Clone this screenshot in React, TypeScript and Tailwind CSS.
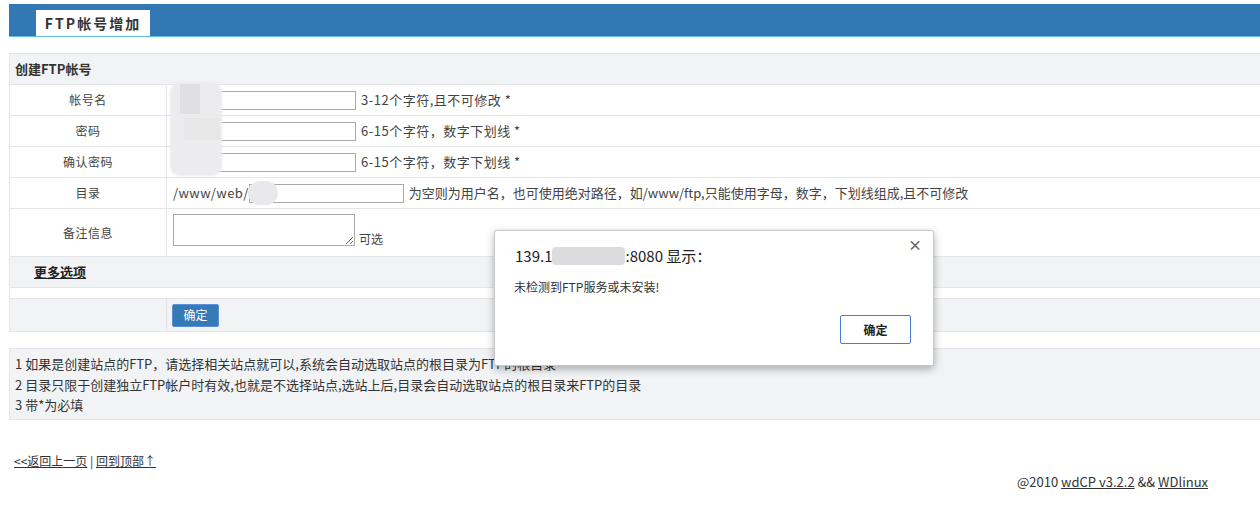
import React from 'react';

const font = { fontFamily: '"Noto Sans CJK SC", "Noto Sans", sans-serif' };

function Row({ label, children, tall }: { label: string; children: React.ReactNode; tall?: boolean }) {
  return (
    <div className={`flex border-b border-[#e3e5ea] bg-white ${tall ? 'h-[48px]' : 'h-[31px]'}`}>
      <div className="w-[157px] shrink-0 border-r border-[#e3e5ea] flex items-center justify-center text-[12px] tracking-[0.5px] text-[#444]">
        {label}
      </div>
      <div className={`flex-1 flex pl-[6px] text-[13px] text-[#444] ${tall ? 'items-start pt-[5px]' : 'items-center'}`}>
        {children}
      </div>
    </div>
  );
}

function Input({ w }: { w: string }) {
  return <input className={`${w} h-[19px] border border-[#a9a9a9] bg-white outline-none`} />;
}

export default function App() {
  return (
    <div className="relative w-[1260px] h-[511px] overflow-hidden bg-white" style={font}>
      <div className="pt-[4px] pl-[9px]">
        {/* top bar */}
        <div className="h-[33px] bg-[#3278b4] border-b border-[#5bc0de] flex items-end pl-[27px]">
          <div className="w-[114px] h-[26px] bg-white flex items-center justify-center text-[14px] font-bold tracking-[2px] text-[#333]">
            FTP帐号增加
          </div>
        </div>

        {/* form */}
        <div className="mt-[16px] border-t border-l border-[#e3e5ea] w-[1260px]">
          <div className="h-[31px] bg-[#f2f3f5] border-b border-[#e3e5ea] flex items-center pl-[5px] text-[13px] font-bold text-[#333]">
            创建FTP帐号
          </div>
          <Row label="帐号名">
            <Input w="w-[183px]" />
            <span className="ml-[5px] tracking-[0.5px]">3-12个字符,且不可修改 *</span>
          </Row>
          <Row label="密码">
            <Input w="w-[183px]" />
            <span className="ml-[5px] tracking-[0.5px]">6-15个字符，数字下划线 *</span>
          </Row>
          <Row label="确认密码">
            <Input w="w-[183px]" />
            <span className="ml-[5px] tracking-[0.5px]">6-15个字符，数字下划线 *</span>
          </Row>
          <Row label="目录">
            <span className="tracking-[0.4px]">/www/web/</span>
            <Input w="w-[155px]" />
            <span className="ml-[5px]">为空则为用户名，也可使用绝对路径，如/www/ftp,只能使用字母，数字，下划线组成,且不可修改</span>
          </Row>
          <Row label="备注信息" tall>
            <div className="flex items-end">
              <textarea className="w-[182px] h-[32px] border border-[#a9a9a9] resize-y outline-none block" />
              <span className="ml-[4px] leading-[14px] text-[12px]">可选</span>
            </div>
          </Row>
          <div className="h-[31px] bg-[#f2f3f5] border-b border-[#e3e5ea] flex items-center pl-[24px]">
            <span className="text-[13px] font-bold text-[#222] underline">更多选项</span>
          </div>
          <div className="h-[11px] bg-white border-b border-[#e3e5ea]" />
          <div className="h-[33px] bg-[#f2f3f5] border-b border-[#e3e5ea] flex">
            <div className="w-[157px] border-r border-[#e3e5ea]" />
            <div className="flex items-center pl-[5px]">
              <button className="w-[47px] h-[23px] bg-[#337ab7] border border-[#5b8fd8] rounded-[2px] text-white text-[12px]">
                确定
              </button>
            </div>
          </div>
        </div>

        {/* notes */}
        <div className="mt-[16px] w-[1260px] h-[72px] bg-[#f2f3f5] border-t border-l border-b border-[#e3e5ea] pl-[5px] pt-[5px] text-[13px] text-[#333] leading-[20.5px]">
          <div>1 如果是创建站点的FTP，请选择相关站点就可以,系统会自动选取站点的根目录为FTP的根目录</div>
          <div>2 目录只限于创建独立FTP帐户时有效,也就是不选择站点,选站上后,目录会自动选取站点的根目录来FTP的目录</div>
          <div>3 带*为必填</div>
        </div>

        {/* footer */}
        <div className="mt-[32px] pl-[5px] text-[12px] text-[#333]">
          <span className="underline">&lt;&lt;返回上一页</span> | <span className="underline">回到顶部↑</span>
        </div>
        <div className="mt-[2px] pl-[1008px] text-[13px] text-[#333]">
          @2010 <span className="underline">wdCP v3.2.2</span> &amp;&amp; <span className="underline">WDlinux</span>
        </div>
      </div>

      {/* privacy blur */}
      <div className="absolute left-[170px] top-[82px] w-[52px] h-[94px] rounded-[10px] bg-[#ececee] blur-[1px]" />
      <div className="absolute left-[180px] top-[84px] w-[20px] h-[30px] bg-[#e0e0e4]" />
      <div className="absolute left-[184px] top-[118px] w-[36px] h-[22px] bg-[#e7e7e8]" />
      <div className="absolute left-[248px] top-[181px] w-[30px] h-[24px] rounded-full bg-[#e9e9ec]" />

      {/* alert dialog */}
      <div className="absolute left-[494px] top-[230px] w-[440px] h-[136px] bg-white border border-[#c8c8c8] rounded-[2px] shadow-[0_3px_8px_rgba(0,0,0,0.3)]">
        <div className="absolute right-[11px] top-[3px] text-[14px] text-[#666] font-bold">×</div>
        <div className="pl-[20px] pt-[14px] text-[15px] text-[#222] flex items-center">
          <span>139.1</span>
          <span className="inline-block w-[73px] h-[18px] bg-[#dcdcde] rounded-[4px]" />
          <span>:8080 显示：</span>
        </div>
        <div className="pl-[19px] mt-[10px] text-[12px] text-[#333]">未检测到FTP服务或未安装!</div>
        <div className="absolute right-[22px] bottom-[21px]">
          <button className="w-[71px] h-[29px] border border-[#4a7bd3] rounded-[2px] bg-white text-[12px] font-bold text-[#222]">
            确定
          </button>
        </div>
      </div>
    </div>
  );
}
